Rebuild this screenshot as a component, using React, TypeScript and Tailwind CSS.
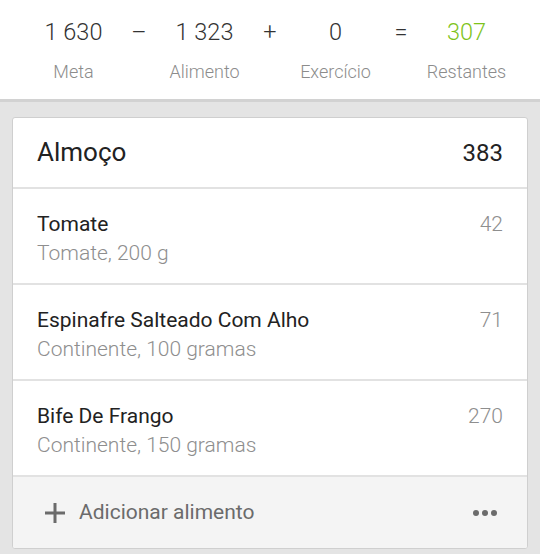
import React from "react";

const summary = [
	{ value: "1 630", label: "Meta", op: "–" },
	{ value: "1 323", label: "Alimento", op: "+" },
	{ value: "0", label: "Exercício", op: "=" },
	{ value: "307", label: "Restantes", op: null },
];

const foods = [
	{ name: "Tomate", detail: "Tomate, 200 g", kcal: 42 },
	{ name: "Espinafre Salteado Com Alho", detail: "Continente, 100 gramas", kcal: 71 },
	{ name: "Bife De Frango", detail: "Continente, 150 gramas", kcal: 270 },
];

const App = () => {
	return (
		<div
			className="w-[540px] h-[554px] overflow-hidden bg-[#e4e4e4]"
			style={{ fontFamily: "Roboto, 'Liberation Sans', sans-serif" }}>
			{/* daily summary */}
			<div className="h-[102px] bg-white flex px-2 pt-[15px] border-b-[3px] border-[#d2d2d2]">
				{summary.map((item, index) => (
					<React.Fragment key={item.label}>
						<div className="flex-1 flex flex-col items-center">
							<span
								className={`text-[23.5px] leading-[34px] font-light ${
									index === 3 ? "text-[#7ec31a]" : "text-[#333333]"
								}`}>
								{item.value}
							</span>
							<span className="mt-[12px] text-[18px] leading-[22px] font-light text-[#8c8c8c]">
								{item.label}
							</span>
						</div>
						{item.op && (
							<div className="w-0 flex justify-center">
								<span className="text-[23.5px] leading-[34px] font-light text-[#333333]">
									{item.op}
								</span>
							</div>
						)}
					</React.Fragment>
				))}
			</div>

			{/* meal card */}
			<div className="mx-3 mt-[15px] w-[516px] rounded-[3px] border border-[#cfcfcf] bg-white overflow-hidden">
				<div className="h-[71px] flex items-center justify-between pl-6 pr-6 border-b-2 border-[#e2e2e2]">
					<span className="text-[26px] text-[#222222]">Almoço</span>
					<span className="text-[24px] text-[#222222]">383</span>
				</div>

				{foods.map((food) => (
					<div
						key={food.name}
						className="flex justify-between pl-6 pr-6 pt-[21px] pb-[15px] border-b-2 border-[#e2e2e2]">
						<div className="flex flex-col">
							<span className="text-[21px] leading-[29px] text-[#222222]">{food.name}</span>
							<span className="text-[21px] leading-[29px] font-light text-[#8e8e8e]">
								{food.detail}
							</span>
						</div>
						<span className="text-[21px] leading-[29px] font-light text-[#8e8e8e]">
							{food.kcal}
						</span>
					</div>
				))}

				<div className="h-[71px] bg-[#f4f4f4] flex items-center justify-between pl-[31px] pr-[30px]">
					<div className="flex items-center gap-[13px]">
						<svg width="22" height="22" viewBox="0 0 22 22">
							<path d="M11 1v20M1 11h20" stroke="#6b6b6b" strokeWidth="3" />
						</svg>
						<span className="text-[21px] text-[#6b6b6b]">Adicionar alimento</span>
					</div>
					<div className="flex items-center gap-[3px]">
						<span className="w-[6px] h-[6px] rounded-full bg-[#6b6b6b]" />
						<span className="w-[6px] h-[6px] rounded-full bg-[#6b6b6b]" />
						<span className="w-[6px] h-[6px] rounded-full bg-[#6b6b6b]" />
					</div>
				</div>
			</div>
		</div>
	);
};

export default App;
